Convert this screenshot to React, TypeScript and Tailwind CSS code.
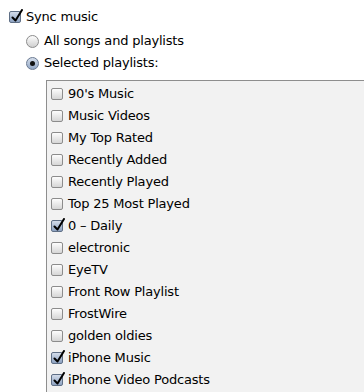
import React from "react";

const font = { fontFamily: '"DejaVu Sans", "Lucida Grande", sans-serif' };

function Check({ checked }: { checked?: boolean }) {
  return (
    <span
      className={
        "relative inline-block w-[12px] h-[12px] rounded-[2px] border shrink-0 " +
        (checked
          ? "border-[#5f6f86] bg-gradient-to-b from-[#d3dcea] to-[#8ea3c2]"
          : "border-[#8c8c8c] bg-gradient-to-b from-[#fdfdfd] to-[#d6d6d6]")
      }
    >
      {checked && (
        <svg
          className="absolute left-[1px] top-[-3px]"
          width="13"
          height="14"
          viewBox="0 0 13 14"
        >
          <path
            d="M1.5 8.5 L4.5 11.5 L11 1"
            fill="none"
            stroke="#000"
            strokeWidth="2"
            strokeLinecap="round"
            strokeLinejoin="round"
          />
        </svg>
      )}
    </span>
  );
}

function Radio({ checked }: { checked?: boolean }) {
  return (
    <span
      className={
        "relative inline-flex items-center justify-center w-[13px] h-[13px] rounded-full border shrink-0 " +
        (checked
          ? "border-[#6a7a92] bg-gradient-to-b from-[#d5deeb] to-[#93a8c6]"
          : "border-[#8c8c8c] bg-gradient-to-b from-[#fdfdfd] to-[#d0d0d0]")
      }
    >
      {checked && <span className="w-[5px] h-[5px] rounded-full bg-[#111]" />}
    </span>
  );
}

const items: [string, boolean][] = [
  ["90's Music", false],
  ["Music Videos", false],
  ["My Top Rated", false],
  ["Recently Added", false],
  ["Recently Played", false],
  ["Top 25 Most Played", false],
  ["0 – Daily", true],
  ["electronic", false],
  ["EyeTV", false],
  ["Front Row Playlist", false],
  ["FrostWire", false],
  ["golden oldies", false],
  ["iPhone Music", true],
  ["iPhone Video Podcasts", true],
];

export default function App() {
  return (
    <div
      className="w-[364px] h-[392px] overflow-hidden bg-white text-black text-[13px] leading-[16px] tracking-[-0.2px]"
      style={font}
    >
      <div className="pl-[9px] pt-[9px]">
        <div className="flex items-center gap-[5px] h-[16px]">
          <Check checked />
          <span>Sync music</span>
        </div>
        <div className="pl-[17px] mt-[8px] flex flex-col gap-[6px]">
          <div className="flex items-center gap-[5px] h-[16px]">
            <Radio />
            <span>All songs and playlists</span>
          </div>
          <div className="flex items-center gap-[5px] h-[16px]">
            <Radio checked />
            <span>Selected playlists:</span>
          </div>
        </div>
      </div>
      <div className="ml-[46px] mt-[9px] w-[400px] h-[400px] border-t border-l border-[#8e8e8e] bg-[#f2f2f2] pl-[4px] pt-[5px] flex flex-col gap-[6px]">
        {items.map(([label, c]) => (
          <div key={label} className="flex items-center gap-[5px] h-[16px]">
            <Check checked={c} />
            <span className="whitespace-nowrap">{label}</span>
          </div>
        ))}
      </div>
    </div>
  );
}
